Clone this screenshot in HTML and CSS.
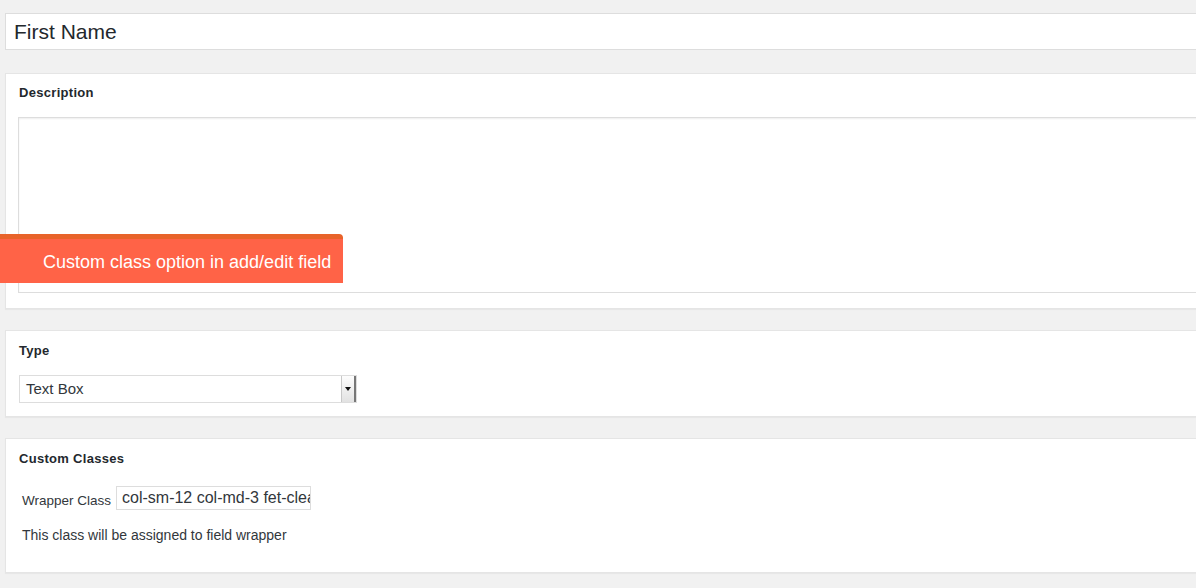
FILE: index.html
```html
<!DOCTYPE html>
<html lang="en">
<head>
  <meta charset="UTF-8">
  <title>Edit Field</title>
  <link rel="stylesheet" href="styles.css">
</head>
<body>

  <div class="page">
    <div class="title-input">First Name</div>

    <!-- Description -->
    <div class="postbox postbox-desc">
      <h3 class="box-title">Description</h3>
      <div class="textarea"></div>
    </div>

    <!-- Type -->
    <div class="postbox postbox-type">
      <h3 class="box-title">Type</h3>
      <div class="select">
        <span class="select-value">Text Box</span>
        <span class="select-arrow"><span class="caret"></span></span>
      </div>
    </div>

    <!-- Custom classes -->
    <div class="postbox postbox-classes">
      <h3 class="box-title">Custom Classes</h3>
      <div class="class-row">
        <label class="class-label" for="wrapperClass">Wrapper Class</label>
        <input class="text-input" id="wrapperClass" type="text" value="col-sm-12 col-md-3 fet-clear" readonly>
      </div>
      <p class="class-help">This class will be assigned to field wrapper</p>
    </div>
  </div>

  <div class="ribbon">Custom class option in add/edit field</div>

</body>
</html>
```

FILE: styles.css
```css
* {
  margin: 0;
  padding: 0;
  box-sizing: border-box;
}

body {
  background: #f1f1f1;
  font-family: 'Liberation Sans', Arial, sans-serif;
  color: #23282d;
  overflow: hidden;
  position: relative;
  height: 588px;
}

.page {
  width: 1230px;
  padding: 13px 0 0 5px;
}

.title-input {
  height: 37px;
  background: #fff;
  border: 1px solid #ddd;
  font-size: 21px;
  line-height: 35px;
  padding-left: 8px;
  color: #23282d;
  margin-bottom: 23px;
}

.postbox {
  background: #fff;
  border: 1px solid #e5e5e5;
  box-shadow: 0 1px 1px rgba(0,0,0,0.04);
  padding: 11px 12px 13px 12px;
  margin-bottom: 21px;
}

.box-title {
  font-size: 13px;
  font-weight: bold;
  line-height: 18px;
  letter-spacing: 0.3px;
  padding-left: 1px;
  color: #23282d;
}

.postbox-desc {
  padding-top: 10px;
  padding-bottom: 15px;
}

.postbox-desc .box-title {
  margin-bottom: 15px;
}

.textarea {
  height: 176px;
  border: 1px solid #ddd;
  box-shadow: inset 0 1px 2px rgba(0,0,0,0.07);
}

.postbox-type .box-title {
  margin-bottom: 15px;
}

.select {
  width: 338px;
  height: 28px;
  margin-left: 1px;
  border: 1px solid #ddd;
  display: flex;
  align-items: stretch;
}

.select-value {
  flex: 1;
  font-size: 15px;
  line-height: 26px;
  padding-left: 6px;
  color: #32373c;
}

.select-arrow {
  width: 15px;
  background: linear-gradient(#fdfdfd, #e2e2e2);
  border-left: 1px solid #c8c8c8;
  border-right: 2px solid #777;
  display: flex;
  align-items: center;
  justify-content: center;
}

.caret {
  width: 0;
  height: 0;
  border-left: 3px solid transparent;
  border-right: 3px solid transparent;
  border-top: 4px solid #111;
}

.postbox-classes {
  padding-bottom: 29px;
}

.postbox-classes .box-title {
  margin-bottom: 18px;
}

.class-row {
  display: flex;
  align-items: center;
  gap: 5px;
  padding-left: 4px;
}

.class-label {
  font-size: 13.5px;
  color: #32373c;
  padding-top: 5px;
}

.text-input {
  width: 195px;
  height: 24px;
  border: 1px solid #ddd;
  outline: none;
  background: #fff;
  font-family: 'Liberation Sans', Arial, sans-serif;
  font-size: 16px;
  padding: 0 0 0 5px;
  color: #32373c;
}

.class-help {
  font-size: 14px;
  line-height: 16px;
  color: #32373c;
  padding-left: 4px;
  margin-top: 17px;
}

.ribbon {
  position: absolute;
  left: 0;
  top: 234px;
  width: 343px;
  height: 49px;
  background: #ff6347;
  border-top: 5px solid #e8632a;
  border-top-right-radius: 4px;
  color: #fff;
  font-size: 18px;
  line-height: 47px;
  padding-left: 43px;
  white-space: nowrap;
}
```
